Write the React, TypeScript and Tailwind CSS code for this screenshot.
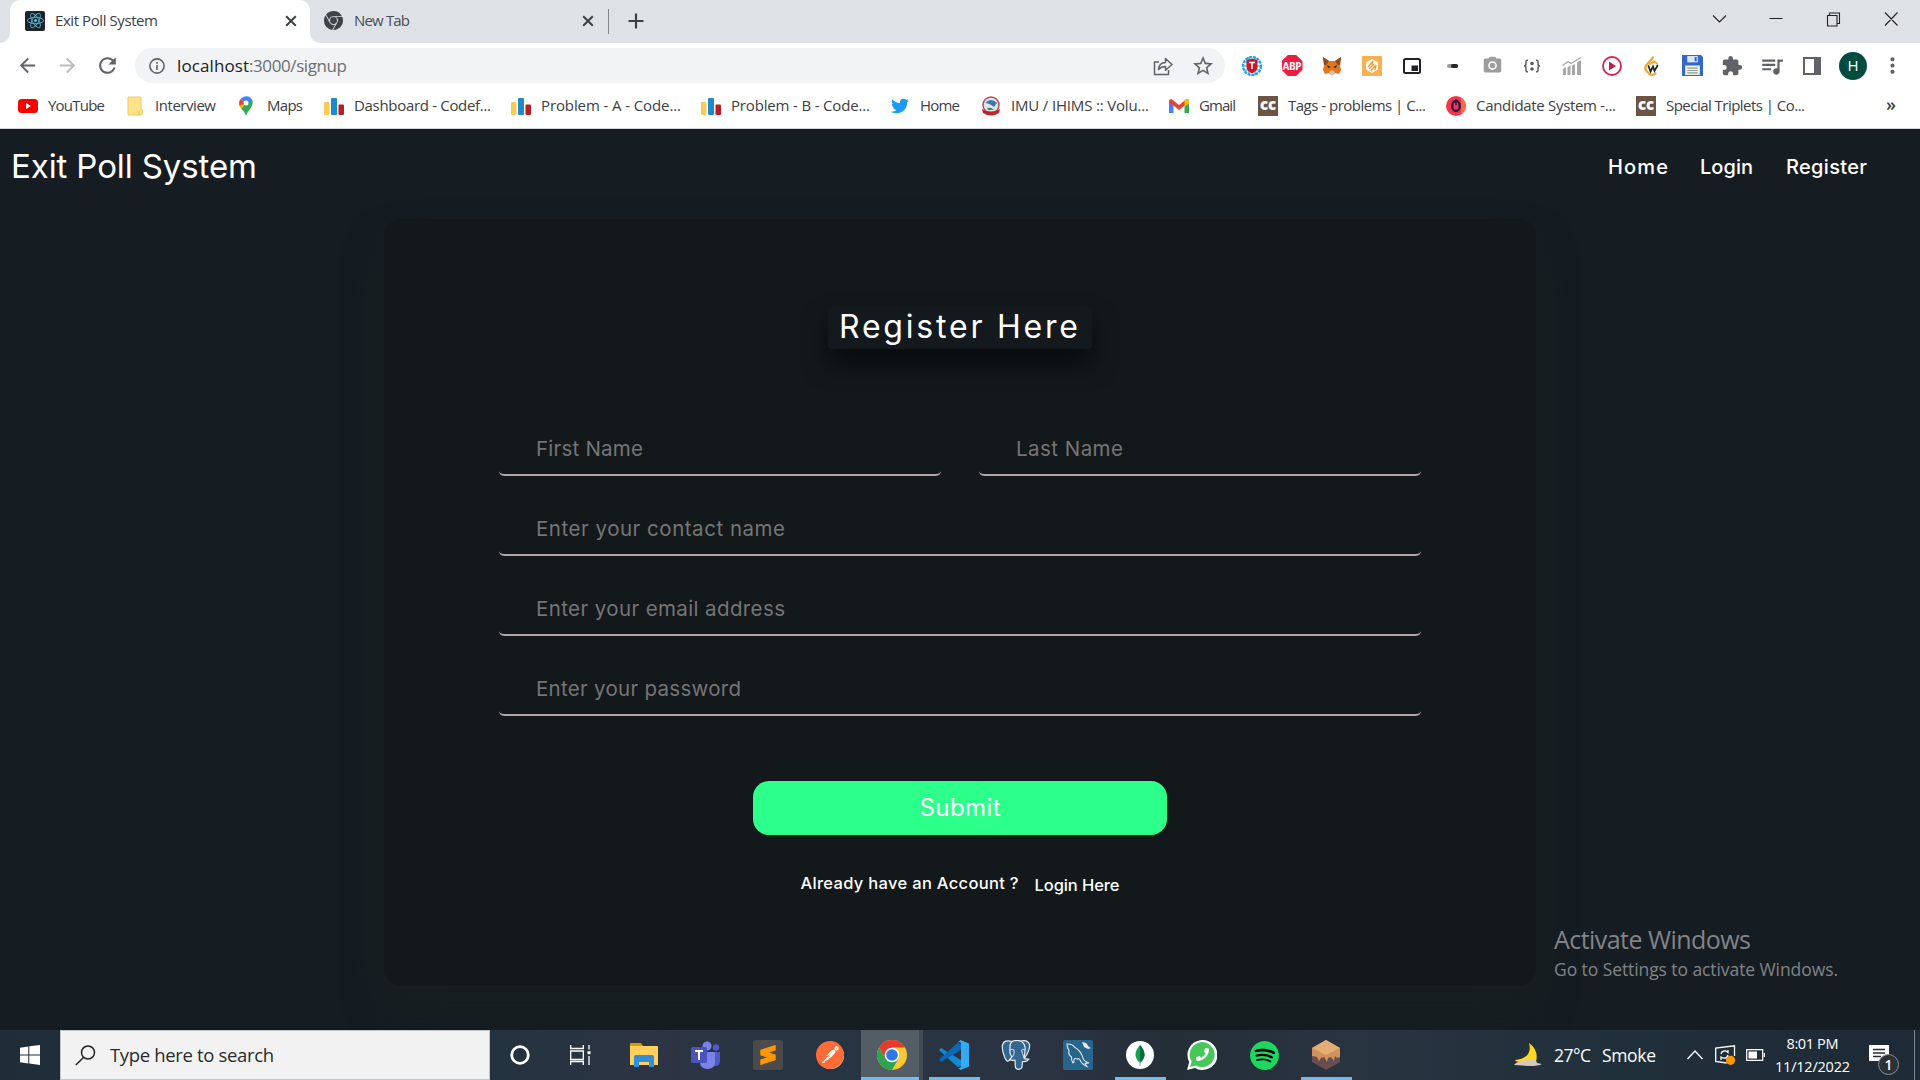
import React, { useLayoutEffect, useRef } from "react";
import { FaTwitter, FaPhoneAlt } from "react-icons/fa";
import { SiGooglechrome, SiSpotify, SiPostman, SiSublimetext, SiReact } from "react-icons/si";
import { MdExtension, MdQueueMusic, MdStarBorder, MdRefresh, MdArrowBack, MdArrowForward, MdCameraAlt, MdMoreVert } from "react-icons/md";

/** One line of text whose tracking is adjusted so that it fills `w` pixels. */
function Fit({ w, className = "", children }: { w: number; className?: string; children: React.ReactNode }) {
  const ref = useRef<HTMLSpanElement>(null);
  useLayoutEffect(() => {
    const el = ref.current;
    if (!el) return;
    el.style.letterSpacing = "0px";
    const n = (el.textContent || "").length;
    const natural = el.getBoundingClientRect().width;
    el.style.letterSpacing = `${(w - natural) / Math.max(n - 1, 1)}px`;
  }, [w]);
  return (
    <span className={`block shrink-0 ${className}`} style={{ width: w }}>
      <span ref={ref} className="inline-block whitespace-nowrap">{children}</span>
    </span>
  );
}

const Close = ({ className = "" }: { className?: string }) => (
  <svg className={`h-3 w-3 shrink-0 ${className}`} viewBox="0 0 12 12" stroke="#3c4043" strokeWidth="2" fill="none">
    <path d="M1.2 1.2 10.8 10.8M10.8 1.2 1.2 10.8" />
  </svg>
);

function TabStrip() {
  return (
    <div className="flex h-[43px] items-center bg-[#dee1e6]">
      <div className="flex h-[43px] w-[10px] items-end bg-white">
        <div className="h-[43px] w-[10px] rounded-br-[10px] bg-[#dee1e6]" />
      </div>
      <div className="flex h-[43px] w-[300px] items-center rounded-t-[10px] bg-white pb-[2px] pl-[15px]">
        <div className="flex h-5 w-5 items-center justify-center rounded-[2px] bg-[#20232a] text-[#53c1de]"><SiReact size={17} /></div>
        <Fit w={103} className="ml-[10px] text-[15px] text-[#3c4043]">Exit Poll System</Fit>
        <Close className="ml-[127px]" />
      </div>
      <div className="h-[43px] w-[14px] bg-white"><div className="h-[43px] w-[14px] rounded-bl-[10px] bg-[#dee1e6]" /></div>
      <div className="flex items-center pb-[2px]">
        <SiGooglechrome size={19} className="shrink-0 text-[#3f4347]" />
        <Fit w={56} className="ml-[11px] text-[15px] text-[#4a4d51]">New Tab</Fit>
        <Close className="ml-[172px]" />
      </div>
      <div className="ml-[14px] h-[25px] w-px bg-[#80868b]" />
      <svg className="mb-[2px] ml-[19px] h-4 w-4" viewBox="0 0 16 16" stroke="#3c4043" strokeWidth="2.2"><path d="M8 .5v15M.5 8h15" /></svg>
      <svg className="mb-[5px] ml-auto mr-[22px] h-4 w-[188px]" viewBox="0 0 188 16" fill="none" stroke="#222" strokeWidth="1.1">
        <path d="m3 4.500 6.500 6.500L16 4.500M59.500 7.500h13M117.500 4.500h9.500v10.500h-9.500zM119.500 4.500V2h10v10.500H127M175 1.500l12.500 13M187.500 1.500 175 14.500" />
      </svg>
    </div>
  );
}

const G = ({ children }: { children: React.ReactNode }) => (
  <div className="flex w-10 shrink-0 items-center justify-center">{children}</div>
);

function Toolbar() {
  return (
    <div className="flex h-[45px] items-center bg-white">
      <div className="flex w-[135px] items-center text-[#5f6368]">
        <MdArrowBack size={23} className="ml-4" />
        <MdArrowForward size={23} className="ml-[17px] text-[#babcbe]" />
        <MdRefresh size={25} className="ml-[16px]" />
      </div>
      <div className="flex h-[35px] w-[1090px] items-center rounded-full bg-[#f1f3f4] pl-[14px]">
        <svg className="h-4 w-4" viewBox="0 0 16 16" fill="none" stroke="#5f6368" strokeWidth="1.6"><circle cx="8" cy="8" r="7.100" /><path d="M8 7v5M8 4v1.700" /></svg>
        <Fit w={72} className="ml-[12px] text-[17px] text-[#202124]">localhost</Fit>
        <Fit w={98} className="text-[17px] text-[#6b6f73]">:3000/signup</Fit>
        <svg className="ml-auto h-5 w-5" viewBox="0 0 20 20" fill="none" stroke="#5f6368" strokeWidth="1.500" strokeLinejoin="round">
          <path d="M6 6H1.500v12.500h14V14M5.500 13.500c.4-5 3-7 7-7V2.500l6.500 6-6.500 5.800V10.500c-3 0-5.200.8-7 3z" />
        </svg>
        <MdStarBorder size={24} className="ml-[18px] mr-[10px] text-[#5f6368]" />
      </div>
      <div className="ml-[7px] flex items-center">
        <G><svg className="h-5 w-5" viewBox="0 0 20 20"><circle cx="10" cy="10" r="9" fill="#fff" stroke="#1da1e6" strokeWidth="2.200" strokeDasharray="3 .9" /><path d="M2 6h16M2 10h16M2 14h16M7 1v18M13 1v18" stroke="#1da1e6" strokeWidth="1.200" /><path d="M4.500 4 10 2.500 15.500 4v7c0 3-2.500 5-5.500 6.500C7 16 4.500 14 4.500 11z" fill="#cb1728" /><path d="M7 6.500h6M10 6.500v6.500" stroke="#fff" strokeWidth="1.500" /></svg></G>
        <G><div className="flex h-[21px] w-[21px] items-center justify-center bg-[#ed1d3f] [clip-path:polygon(30%_0,70%_0,100%_30%,100%_70%,70%_100%,30%_100%,0_70%,0_30%)]"><Fit w={19} className="text-[10px] font-bold leading-none text-white">ABP</Fit></div></G>
        <G><svg className="h-5 w-5" viewBox="0 0 20 20"><path d="m1 1 6 4h6l6-4-1 8 1 5-2 4-4-1-2 2H9l-2-2-4 1-2-4 1-5z" fill="#e4761b" /><path d="m1 1 6 4-3 4H2zM19 1l-6 4 3 4h2z" fill="#8a4a22" /><path d="m7 16 2-1.500h2l2 1.500-2 3H9z" fill="#d7c1b3" /><path d="m5 9 4 2-3 1zM15 9l-4 2 3 1z" fill="#233447" /></svg></G>
        <G><svg className="h-5 w-5" viewBox="0 0 20 20"><rect width="20" height="20" fill="#fbb04e" /><path d="M10 3 16 6.500v7L10 17l-6-3.500v-7z" fill="#fff" /><path d="m6 11 5-6-1 4M9 15l5-6-1 5M7 13l5-5" stroke="#f59b35" strokeWidth="1.300" fill="none" /></svg></G>
        <G><svg className="h-[18px] w-[18px]" viewBox="0 0 18 18"><rect x="1" y="2" width="16" height="14" rx="1.500" fill="#fff" stroke="#202124" strokeWidth="2" /><path d="M8.500 8.500H15V14H8.500z" fill="#202124" /></svg></G>
        <G><div className="flex h-1 w-[11px] rounded-sm bg-[#9a9a9a]"><div className="ml-[4px] h-1 w-[7px] rounded-sm bg-[#252525]" /></div></G>
        <G><MdCameraAlt size={21} className="text-[#9d9d9d]" /></G>
        <G><svg className="h-[14px] w-[18px]" viewBox="0 0 18 14" fill="none" stroke="#5c5c5c" strokeWidth="1.500"><path d="M5 1.200Q3 1 3 3v2q0 2-2 2 2 0 2 2v2q0 2 2 1.800M13 1.200Q15 1 15 3v2q0 2 2 2-2 0-2 2v2q0 2-2 1.800" /><circle cx="9" cy="4.500" r="1.800" fill="#5c5c5c" stroke="none" /><circle cx="9" cy="10" r="1.800" fill="#5c5c5c" stroke="none" /></svg></G>
        <G><svg className="h-5 w-5" viewBox="0 0 20 20" fill="#a7a7a7"><path d="M1 13l3-2v8H1zM5.500 11.500l3-2.500v10h-3zM10 9.500l3-1.500v11h-3zM15 6.500l4-2.500v15h-4z" /><path d="M.5 9.500 6 5.500l3 2 10-6" stroke="#a7a7a7" strokeWidth="1.400" fill="none" /></svg></G>
        <G><svg className="h-5 w-5" viewBox="0 0 20 20"><circle cx="10" cy="10" r="9" fill="#fff" stroke="#d8234f" strokeWidth="1.800" /><path d="M7 5.500 14 10l-7 4.500z" fill="#c9184a" /></svg></G>
        <G><svg className="h-5 w-5" viewBox="0 0 20 20" fill="none" strokeLinecap="round"><path d="M11 1.500 4.500 9Q2 12 4.500 15l3 3q3 2 6-.5" stroke="#f5a623" strokeWidth="2.200" /><path d="m6.500 10 2 5.500 2.500-5 1.500 4.500 3-5.500" stroke="#222" strokeWidth="1.700" /><path d="m8 8 4-2.500 3 2" stroke="#f5a623" strokeWidth="2" /></svg></G>
        <G><svg className="h-[21px] w-[21px]" viewBox="0 0 20 20"><path d="M0 0h18l2 2v18H0z" fill="#3468c8" /><path d="M5 1h10v6H5z" fill="#dce6f7" /><path d="M12 2h2v4h-2z" fill="#3468c8" /><path d="M3 10h14v9H3z" fill="#f4f2e8" /><path d="M5 12.500h10M5 14.700h10M5 17h10" stroke="#8ca18c" /></svg></G>
        <G><MdExtension size={22} className="text-[#5f6368]" /></G>
        <G><MdQueueMusic size={26} className="text-[#5f6368]" /></G>
        <G><div className="h-[18px] w-[18px] border-2 border-r-[7px] border-[#5f6368]" /></G>
      </div>
      <div className="ml-[7px] flex h-7 w-7 items-center justify-center rounded-full bg-[#004d40] text-[15px] text-white">H</div>
      <MdMoreVert size={25} className="ml-[13px] text-[#5f6368]" />
    </div>
  );
}

const Bars = () => (
  <svg className="h-5 w-5" viewBox="0 0 20 20"><rect y="6" width="5.500" height="13" rx="1" fill="#f8cb53" /><rect x="7" y="2" width="6" height="17" rx="1" fill="#1f8acb" /><rect x="14.500" y="8.500" width="5.500" height="10.500" rx="1" fill="#b71e2a" /></svg>
);
const CC = () => <div className="flex h-5 w-5 items-center justify-center bg-[#6b5443]"><Fit w={16} className="pb-[3px] text-[15px] font-extrabold leading-none text-white">cc</Fit></div>;

const bookmarks: { icon: React.ReactNode; iw: string; ml: string; gap: string; text: string; w: number }[] = [
  { ml: "ml-[18px]", iw: "w-5", gap: "ml-[10px]", text: "YouTube", w: 57, icon: <svg className="h-5 w-5" viewBox="0 0 20 20"><rect y="3" width="20" height="14" rx="3.500" fill="#f00" /><path d="m8 7 5 3-5 3z" fill="#fff" /></svg> },
  { ml: "ml-[22px]", iw: "w-4", gap: "ml-[12px]", text: "Interview", w: 61, icon: <svg className="h-5 w-4" viewBox="0 0 16 20"><path d="M1 1h13v12l1.500 1v4L14 19H1z" fill="#fee28b" stroke="#f0ca62" strokeWidth="1" /><path d="M12 15v4" stroke="#e9bd48" /></svg> },
  { ml: "ml-[23px]", iw: "w-[14px]", gap: "ml-[14px]", text: "Maps", w: 36, icon: <svg className="h-5 w-[14px]" viewBox="0 0 14 20"><path d="M7 20C6 15 0 12 0 7l7-1 6.500-1.500C15 11 8 15 7 20z" fill="#34a853" /><path d="M1 4 7 7l-4.500 6C1 11-.8 8 1 4z" fill="#fbbc04" /><path d="M1.500 3 7 7 1 9.500Q-.8 6 1.500 3z" fill="#ea4335" /><path d="M1.500 3C5-1 12-1 13.500 5L7 7z" fill="#4285f4" /><circle cx="7" cy="7" r="2.500" fill="#fff" /></svg> },
  { ml: "ml-[21px]", iw: "w-5", gap: "ml-[10px]", text: "Dashboard - Codef...", w: 137, icon: <Bars /> },
  { ml: "ml-[20px]", iw: "w-5", gap: "ml-[10px]", text: "Problem - A - Code...", w: 140, icon: <Bars /> },
  { ml: "ml-[20px]", iw: "w-5", gap: "ml-[10px]", text: "Problem - B - Code...", w: 139, icon: <Bars /> },
  { ml: "ml-[20px]", iw: "w-5", gap: "ml-[10px]", text: "Home", w: 40, icon: <FaTwitter size={18} className="text-[#1d9bf0]" /> },
  { ml: "ml-[21px]", iw: "w-5", gap: "ml-[10px]", text: "IMU / IHIMS :: Volu...", w: 138, icon: <svg className="h-5 w-5" viewBox="0 0 20 20"><ellipse cx="10" cy="9" rx="8" ry="8" fill="#dfe5e8" stroke="#b94b4e" strokeWidth="1.500" /><path d="M4 7q6-6 12 0l-3 4q-5-4-9-4z" fill="#3879b8" /><path d="M6 12q4-1 7 2H7z" fill="#3e8a55" /><path d="M1 13q9 5 18 0l-1 4q-8 5-16 0z" fill="#c4202e" /></svg> },
  { ml: "ml-[20px]", iw: "w-5", gap: "ml-[10px]", text: "Gmail", w: 37, icon: <svg className="h-5 w-5" viewBox="0 0 20 20"><path d="M0 5v12h4.500V8z" fill="#4285f4" /><path d="M20 5v12h-4.500V8z" fill="#34a853" /><path d="M0 5q0-2 2.500-2L10 9l7.500-6Q20 3 20 5v1l-10 8L0 6z" fill="#ea4335" /><path d="M15.500 4.600 17.500 3Q20 3 20 5v2.500L15.500 11z" fill="#fbbc04" /></svg> },
  { ml: "ml-[22px]", iw: "w-5", gap: "ml-[10px]", text: "Tags - problems | C...", w: 138, icon: <CC /> },
  { ml: "ml-[20px]", iw: "w-5", gap: "ml-[10px]", text: "Candidate System -...", w: 140, icon: <svg className="h-5 w-5" viewBox="0 0 20 20"><circle cx="10" cy="10" r="10" fill="#f4364c" /><path d="M15 1.500A10 10 0 0 1 15 18.500z" fill="#ff6a3d" /><ellipse cx="10" cy="10" rx="3.800" ry="5" fill="none" stroke="#2b1b4d" strokeWidth="2.400" /><path d="M10 3v6" stroke="#2b1b4d" strokeWidth="1.400" /></svg> },
  { ml: "ml-[20px]", iw: "w-5", gap: "ml-[10px]", text: "Special Triplets | Co...", w: 139, icon: <CC /> },
];

function Bookmarks() {
  return (
    <div className="flex h-[41px] items-center border-b border-[#d5d7da] bg-white pb-[5px] text-[#3c4043]">
      {bookmarks.map((b) => (
        <div key={b.text} className={`flex shrink-0 items-center ${b.ml}`}>
          <div className={`flex justify-center ${b.iw}`}>{b.icon}</div>
          <Fit w={b.w} className={`pb-[1px] text-[15px] ${b.gap}`}>{b.text}</Fit>
        </div>
      ))}
      <span className="ml-[81px] pb-1 text-[18px] font-semibold leading-none">»</span>
    </div>
  );
}

const Field = ({ text, w, className }: { text: string; w: number; className: string }) => (
  <div className={`flex h-[53px] items-center rounded-[5px] border-b-2 border-[#b0a5a5] pl-[37px] pt-[2px] text-[#757575] ${className}`}>
    <Fit w={w} className="text-[20.500px]">{text}</Fit>
  </div>
);

function SignupPage() {
  return (
    <div className="flex h-[901px] flex-col bg-[#161d22] font-[Inter,sans-serif] text-white">
      <div className="flex h-[90px] items-start pl-[11px]">
        <Fit w={246} className="mt-[13px] text-[33px] leading-[48px]">Exit Poll System</Fit>
        <div className="ml-auto mr-[53px] mt-[23px] flex text-[20px] font-[450] leading-[30px]">
          <Fit w={60}>Home</Fit>
          <Fit w={53} className="ml-[32px]">Login</Fit>
          <Fit w={81} className="ml-[33px]">Register</Fit>
        </div>
      </div>
      <div className="mx-auto flex h-[767px] w-[1152px] flex-col items-center rounded-[18px] bg-[#13181b] shadow-[0_25px_45px_-8px_rgba(25,31,30,0.7)]">
        <div className="mt-[87px] flex h-[43px] w-[264px] items-center rounded-[4px] bg-[#14191d] pl-[11px] shadow-[0_15px_25px_rgba(0,0,0,0.5)]">
          <Fit w={239} className="pb-[1px] text-[32px] leading-[42px]">Register Here</Fit>
        </div>
        <div className="mt-[74px] flex w-[922px] flex-wrap justify-between gap-y-[27px]">
          <Field text="First Name" w={107} className="w-[442px]" />
          <Field text="Last Name" w={107} className="w-[442px]" />
          <Field text="Enter your contact name" w={249} className="w-full" />
          <Field text="Enter your email address" w={249} className="w-full" />
          <Field text="Enter your password" w={205} className="w-full" />
        </div>
        <button className="mt-[65px] flex h-[54px] w-[414px] items-center justify-center rounded-[16px] bg-[#2cff8a] pb-[1px]">
          <Fit w={81} className="text-[24px]">Submit</Fit>
        </button>
        <div className="mt-[36px] flex text-[16.500px] font-[450] leading-6">
          <Fit w={218}>Already have an Account ?</Fit>
          <Fit w={85} className="ml-[16px] mt-[2px]">Login Here</Fit>
        </div>
      </div>
    </div>
  );
}

const TaskApp = ({ children, active = "" }: { children: React.ReactNode; active?: string }) => (
  <div className={`flex h-[50px] w-[62px] shrink-0 flex-col items-center ${active === "sel" ? "border-r-4 border-[#404b54] bg-[#525d66]" : ""}`}>
    <div className={`flex h-[47px] items-center pt-[3px] ${active === "sel" ? "pl-[3px]" : ""}`}>{children}</div>
    {active !== "" && <div className={`h-[3px] bg-[#76b9ed] ${active === "sel" ? "w-full" : "w-[51px]"}`} />}
  </div>
);

function Taskbar() {
  return (
    <div className="flex h-[50px] items-center bg-[linear-gradient(90deg,#1f2d38_0,#23333f_26%,#2d3443_34%,#263541_43%,#2b3341_55%,#232e37_61%,#293441_70%,#20303b_84%,#1e2a35_100%)] text-white">
      <svg className="ml-5 h-5 w-5 shrink-0" viewBox="0 0 20 20" fill="#fff"><path d="M0 2.800 8.300 1.500v8H0zM9.300 1.300 20 0v9.500H9.300zM0 10.500h8.300v8L0 17.300zM9.300 10.500H20V20L9.300 18.600z" /></svg>
      <div className="ml-5 flex h-[50px] w-[430px] shrink-0 items-center border border-[#c4c5c6] bg-[#f2f2f2] pl-[14px] text-[#2b2b2b]">
        <svg className="h-[21px] w-[21px]" viewBox="0 0 21 21" fill="none" stroke="#222" strokeWidth="1.500"><circle cx="13" cy="7.500" r="6.500" /><path d="M8.500 12.500.8 20" /></svg>
        <Fit w={164} className="ml-[14px] text-[18.500px]">Type here to search</Fit>
      </div>
      <svg className="ml-5 h-5 w-5 shrink-0" viewBox="0 0 20 20" fill="none" stroke="#fff" strokeWidth="2.800"><circle cx="10" cy="10" r="8.300" /></svg>
      <svg className="ml-[40px] h-5 w-[21px] shrink-0" viewBox="0 0 21 20" fill="none" stroke="#fff" strokeWidth="1.300"><path d="M.7 0v3.500h12.600V0M.7 6h12.600v8.500H.7zM.7 20v-3.500h12.600V20M19 0v4.500M19 11v9" /><path d="M17.500 6.200h3v3h-3z" fill="#fff" stroke="none" /></svg>
      <div className="ml-[22px] flex">
        <TaskApp><svg className="h-6 w-7" viewBox="0 0 28 24"><path d="M0 1q0-1 1-1h10l2 3H0z" fill="#e09b00" /><path d="M0 3h27q1 0 1 1v18H0z" fill="#ffd15c" /><path d="M4 24V14q0-2 2-2h16q2 0 2 2v10h-5v-5H9v5z" fill="#2f8fdd" /></svg></TaskApp>
        <TaskApp><svg className="h-7 w-[30px]" viewBox="0 0 30 28"><circle cx="16" cy="5" r="4.500" fill="#7b83eb" /><circle cx="25" cy="6.500" r="3.200" fill="#5059c9" /><path d="M19 11h10v9q0 5-5 5h-5z" fill="#5059c9" /><path d="M9 11h15v10q0 7-7.500 7T9 21z" fill="#7b83eb" /><rect y="6" width="16" height="16" rx="1.500" fill="#4b53bc" /><path d="M4 10h8M8 10v9" stroke="#fff" strokeWidth="2" /></svg></TaskApp>
        <TaskApp><div className="flex h-[30px] w-[30px] items-center justify-center rounded-[3px] bg-[#4b4b4b] text-[#ff9800]"><SiSublimetext size={20} /></div></TaskApp>
        <TaskApp><div className="flex h-[27px] w-[27px] items-center justify-center rounded-full bg-white text-[#ff6c37]"><SiPostman size={28} className="shrink-0" /></div></TaskApp>
        <TaskApp active="sel"><svg className="h-[30px] w-[30px]" viewBox="0 0 30 30"><circle cx="15" cy="15" r="15" fill="#fcc934" /><path d="M2 7.500A15 15 0 0 1 28 7.500H15L8.500 18.800z" fill="#e33b2e" /><path d="M2 7.500A15 15 0 0 0 15 30l6.500-11.200H8.500z" fill="#2da44e" /><circle cx="15" cy="15" r="7.300" fill="#fff" /><circle cx="15" cy="15" r="5.800" fill="#2c78e8" /></svg></TaskApp>
        <TaskApp active="run"><svg className="h-[30px] w-[30px]" viewBox="0 0 30 30"><path d="m2 8-2 2 18.500 17 3.500-1V20z" fill="#1389d6" /><path d="m2 22-2-2.500L18.500 3 22 4v6z" fill="#0969b8" /><path d="m21.500 0 8.500 3.500v23L21.500 30l-3-2.500q3.500 1.500 3.500-1.500V4q0-3-3.500-1.500z" fill="#33a9f2" /></svg></TaskApp>
        <TaskApp><svg className="h-[30px] w-[30px]" viewBox="0 0 30 30" fill="#336791" stroke="#e6eef4" strokeWidth="1.200" strokeLinejoin="round"><path d="M11 1.500Q3-.5 1.500 5 .5 9 4 18q2 4.500 4 2.500l3-3.500zM20 1Q27-.5 28.700 5q.3 5-5 13l-3-1z" /><path d="M11 1.500Q16-.5 20 1.200q5 3 4 9.800l-1 7q1.500 1.500 5 1-2 3-6.500 2.500L21 27q-.8 2.500-3.500 2.300-3 0-3.200-3L14 20q-3 1-5-.5l2-2.500Q8 13 9 8q-.5-4 2-6.500z" /><path d="M9 10q2-1.500 4 0 1 4-1.500 7M23.500 10q-2-1.500-3 .2.800 3 2.500 7.500" fill="none" strokeWidth=".9" /></svg></TaskApp>
        <TaskApp><svg className="h-[30px] w-[30px]" viewBox="0 0 30 30"><rect width="30" height="30" rx="2" fill="#27658c" /><path d="M4 4q5-.5 8 3.500 6 3 8.500 12 1.500 2.500 5.500 3.500l-4 .5 2 3q-5-2-7-6.500-1.500-2-2.500-1Q10 17 11 22l-1 1q-2-3-1.500-6Q5 15 6 10.500 4 8 4 4z" fill="none" stroke="#dce7ee" strokeWidth="1.100" /><path d="m19 2 4 1 3 4 2 1-3 1-4-2z" fill="#e4edf3" /></svg></TaskApp>
        <TaskApp active="run"><svg className="h-7 w-7" viewBox="0 0 28 28"><circle cx="14" cy="14" r="14" fill="#fff" /><path d="M14 4q9 10 0 18-9-8 0-18z" fill="#10a34f" /><path d="M14 4q9 10 0 18z" fill="#0b6b3c" /><path d="M14 20v5" stroke="#8aa" /></svg></TaskApp>
        <TaskApp><div className="relative h-[30px] w-[30px]"><svg className="h-[30px] w-[30px]" viewBox="0 0 30 30"><path d="M0 30 2.200 22A15 15 0 1 1 8 28z" fill="#fff" /><path d="m3 27 1.700-5.500A12.500 12.500 0 1 1 9 25.500z" fill="#48c65a" /></svg><FaPhoneAlt size={13} className="absolute left-[9px] top-[8px] -scale-x-100 text-white" /></div></TaskApp>
        <TaskApp><div className="rounded-full bg-black text-[#1ed760]"><SiSpotify size={29} /></div></TaskApp>
        <TaskApp active="run"><svg className="h-[30px] w-7" viewBox="0 0 28 30"><path d="M0 14h28v8L14 30 0 22z" fill="#684d52" /><path d="m14 0 14 8v9l-3 1-2-2-1 5-3-4-3 1-1 4-3-5-3 1-2 3-2-4-5-1V8z" fill="#cf925a" /><path d="m14 0 14 8-14 7L0 8z" fill="#e3ae73" /></svg></TaskApp>
      </div>
      <svg className="ml-[157px] h-6 w-[29px] shrink-0" viewBox="0 0 29 24"><path d="M15 0q10 7 7 19H7q-5 0-6-2 18-2 14-17z" fill="#ffd91f" /><path d="M0 22q4-5 9-3 3-5 8-2 5-1 6 3l5 1q-4 2-12 2z" fill="#d8c8c0" /></svg>
      <Fit w={37} className="ml-[11px] text-[17.500px]">27°C</Fit>
      <Fit w={54} className="ml-[11px] text-[17.500px]">Smoke</Fit>
      <svg className="ml-[31px] h-[10px] w-4 shrink-0" viewBox="0 0 16 10" fill="none" stroke="#fff" strokeWidth="1.400"><path d="m.5 9 7.500-8 7.500 8" /></svg>
      <svg className="ml-[12px] h-5 w-[21px] shrink-0" viewBox="0 0 21 20" fill="none" stroke="#fff" strokeWidth="1.300"><path d="M19.500 11V.8L.7 3v13.500l11 1.500M6 9q1-4 5-3l2 1.500V5M13 10q-1 4-5 3l-2-1v3" /><circle cx="15.500" cy="15.300" r="4.600" fill="#ff9800" stroke="none" /></svg>
      <svg className="ml-[10px] h-3 w-[19px] shrink-0" viewBox="0 0 19 12" fill="none" stroke="#fff" strokeWidth="1.200"><path d="M.7.700h16v10.600H.7zM18.300 4v4" /><path d="M2.500 2.500h8.500v7H2.500z" fill="#fff" stroke="none" /></svg>
      <div className="ml-[10px] flex w-[75px] shrink-0 flex-col items-center gap-[1px] text-[14.500px] leading-[22px]">
        <Fit w={52}>8:01 PM</Fit>
        <Fit w={75}>11/12/2022</Fit>
      </div>
      <div className="relative ml-[19px] h-[20px] w-5 shrink-0">
        <svg className="h-5 w-5" viewBox="0 0 20 20"><path d="M0 0h20v16h-6l-4 4v-4H0z" fill="#fff" /><path d="M4 4.500h12M4 8h12M4 11.500h8" stroke="#222f38" strokeWidth="1.300" /></svg>
        <div className="absolute left-[9px] top-[9px] flex h-[21px] w-[21px] items-center justify-center rounded-full border border-[#8a8f93] bg-[#2c3135] text-[14px] font-semibold">1</div>
      </div>
      <div className="ml-[25px] h-[50px] w-px bg-[#7b858c]" />
    </div>
  );
}

export default function App() {
  return (
    <div className="relative flex h-[1080px] w-[1920px] flex-col overflow-hidden bg-[#161d22] font-['Open_Sans',sans-serif]">
      <TabStrip />
      <Toolbar />
      <Bookmarks />
      <SignupPage />
      <Taskbar />
      <div className="absolute left-[1554px] top-[921px] text-[#808487]">
        <Fit w={197} className="text-[25px] leading-9">Activate Windows</Fit>
        <Fit w={284} className="text-[17.500px] leading-[24px]">Go to Settings to activate Windows.</Fit>
      </div>
    </div>
  );
}
